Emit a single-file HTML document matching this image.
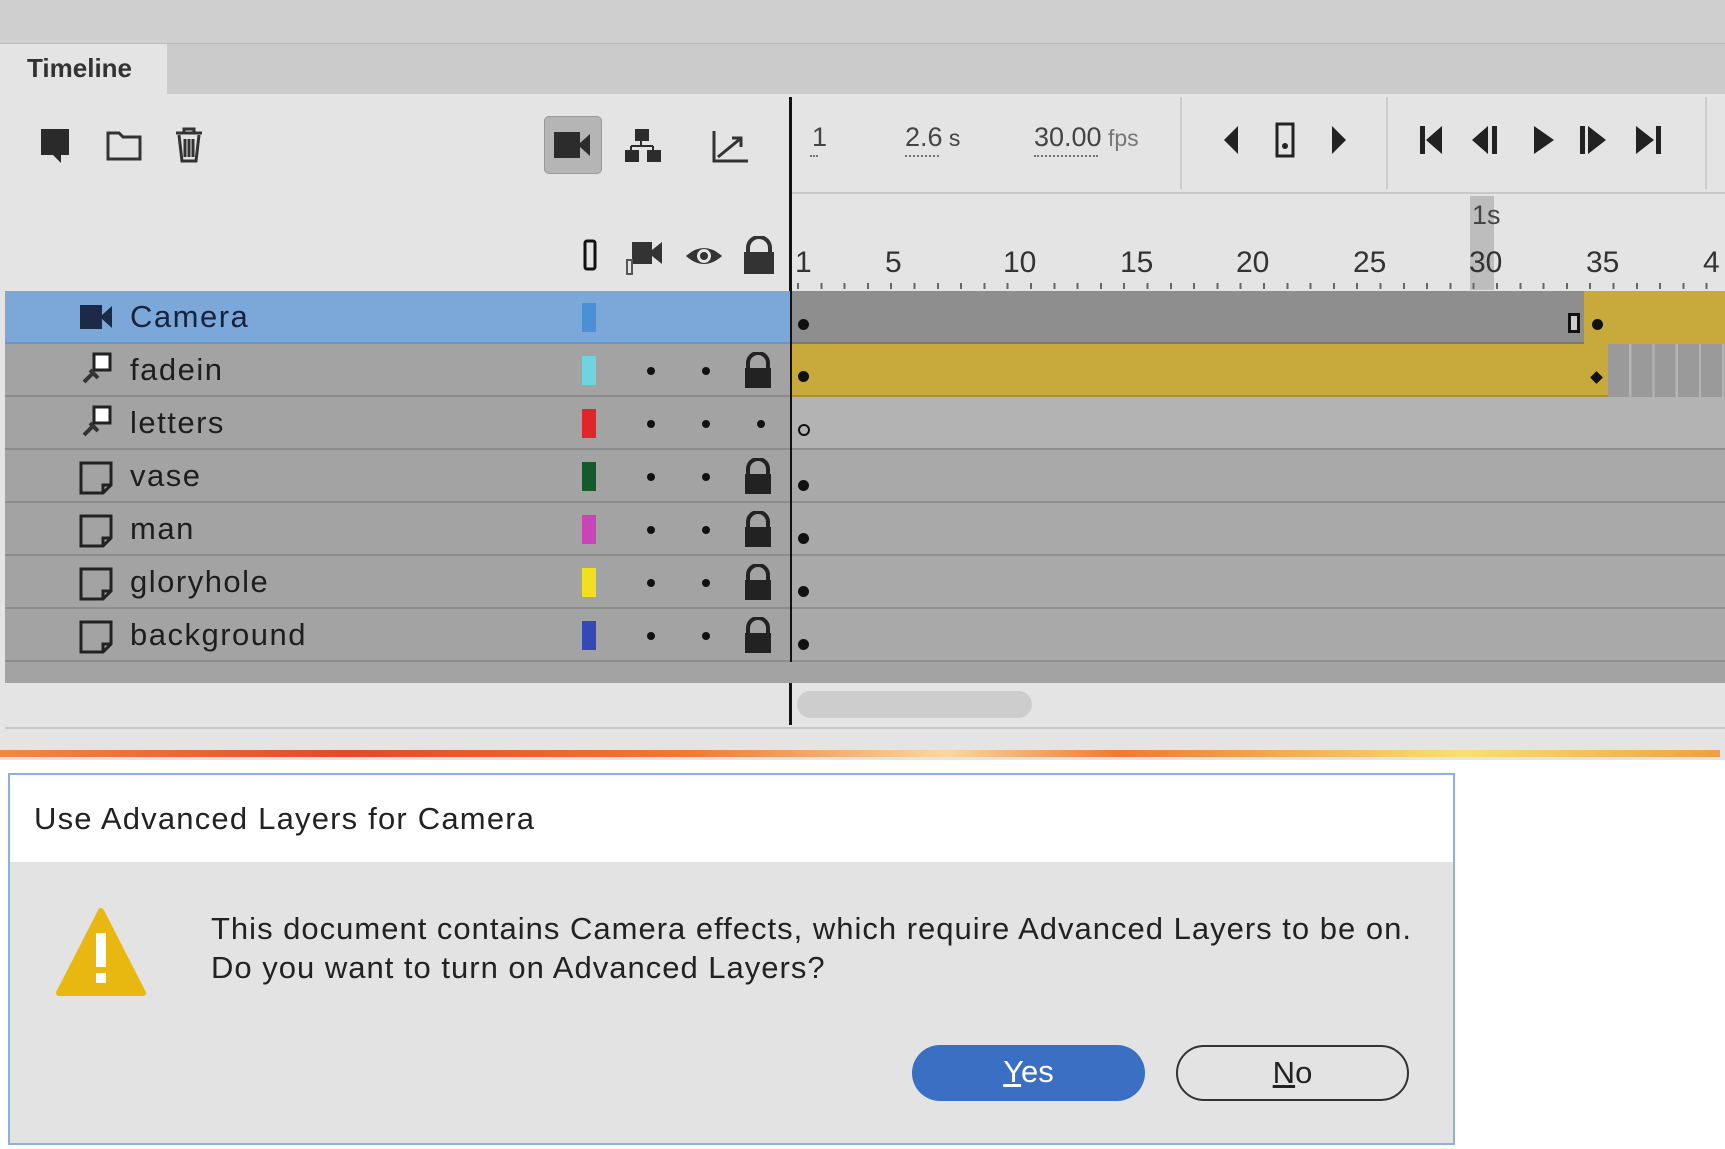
<!DOCTYPE html>
<html><head><meta charset="utf-8"><style>
*{margin:0;padding:0;box-sizing:border-box}
body{width:1725px;height:1149px;background:#fff;position:relative;overflow:hidden;font-family:"Liberation Sans",sans-serif;color:#222}
.a{position:absolute}
.t{position:absolute;white-space:nowrap}
.row{position:absolute;left:5px;width:785px;height:53px;background:#a3a3a3;border-bottom:2px solid #8c8c8c}
.rr{position:absolute;left:792px;width:933px;height:53px;background:#a9a9a9;border-bottom:2px solid #8f8f8f}
.nm{position:absolute;left:130px;top:8px;font-size:31px;color:#1e1e1e;letter-spacing:1.5px;white-space:nowrap}
.sw{position:absolute;left:582px;top:12px;width:14px;height:29px}
.dot{position:absolute;width:8px;height:8px;border-radius:50%;background:#111;top:23px}
.kf{position:absolute;width:11px;height:11px;border-radius:50%;background:#111;left:6px;top:30px}
.fn{position:absolute;top:246px;font-size:30px;color:#333}
</style></head><body>
<div class="a" style="left:0;top:0;width:1725px;height:760px;background:#e4e4e4"></div>
<div class="a" style="left:0;top:0;width:1725px;height:44px;background:#cfcfcf;border-bottom:1px solid #bdbdbd"></div>
<div class="a" style="left:167px;top:44px;width:1558px;height:50px;background:#cbcbcb"></div>
<div class="a" style="left:5px;top:44px;width:162px;height:52px;background:#e4e4e4"></div>
<div class="t" style="left:27px;top:53px;font-size:26px;font-weight:bold;color:#333">Timeline</div>
<svg class="a" style="left:38px;top:123px" width="180" height="42">
<path d="M3 6h28v26h-8v8l-8-8h-12z" fill="#2a2a2a"/>
<path d="M70 10h11l4 4h17v22h-32z" fill="none" stroke="#333" stroke-width="3"/>
<path d="M138 10h26M146 10v-4h10v4M141 12l3 26h14l3-26M147 16v18M151 16v18M155 16v18" fill="none" stroke="#333" stroke-width="3"/>
</svg>
<div class="a" style="left:544px;top:116px;width:58px;height:58px;background:#b5b5b5;border-radius:5px;border:1px solid #999"></div>
<svg class="a" style="left:550px;top:125px" width="200" height="42">
<path d="M4 7h26v26h-26z M30 18l10-9v22l-10-9z" fill="#2c2c2c"/>
<path d="M86 5h12v10h-12zM91 15v6M81 21h22M81 21v5M103 21v5M76 26h12v10h-12zM98 26h12v10h-12z" fill="#2c2c2c" stroke="#2c2c2c" stroke-width="2"/>
<path d="M164 6v30h34M168 32l22-18M182 13h9v9" fill="none" stroke="#333" stroke-width="3"/>
</svg>
<div class="a" style="left:789px;top:97px;width:3px;height:628px;background:#111"></div>
<div class="t" style="left:812px;top:122px;font-size:27px;color:#444">1</div>
<div class="t" style="left:905px;top:122px;font-size:27px;color:#444">2.6<span style="font-size:23px"> s</span></div>
<div class="t" style="left:1034px;top:122px;font-size:27px;color:#444">30.00<span style="font-size:23px;color:#777"> fps</span></div>
<div class="a" style="left:810px;top:155px;width:8px;border-top:2px dotted #777"></div>
<div class="a" style="left:905px;top:155px;width:34px;border-top:2px dotted #777"></div>
<div class="a" style="left:1034px;top:155px;width:64px;border-top:2px dotted #777"></div>
<div class="a" style="left:1180px;top:97px;width:2px;height:92px;background:#ccc"></div>
<div class="a" style="left:1386px;top:97px;width:2px;height:92px;background:#ccc"></div>
<div class="a" style="left:1705px;top:97px;width:2px;height:92px;background:#ccc"></div>
<svg class="a" style="left:1220px;top:120px" width="500" height="40">
<path d="M4 20l14-14v28z" fill="#222"/>
<rect x="57" y="4" width="16" height="32" fill="none" stroke="#222" stroke-width="3"/><circle cx="65" cy="26" r="3" fill="#222"/>
<path d="M112 6l14 14-14 14z" fill="#222"/>
<path d="M200 6h5v28h-5zM222 6v28l-16-14z" fill="#222"/>
<path d="M268 6v28l-16-14zM272 6h5v28h-5z" fill="#222"/>
<path d="M314 6l20 14-20 14z" fill="#222"/>
<path d="M360 6h5v28h-5zM368 6l18 14-18 14z" fill="#222"/>
<path d="M416 6l18 14-18 14zM436 6h5v28h-5z" fill="#222"/>
</svg>
<div class="a" style="left:792px;top:192px;width:933px;height:2px;background:#c8c8c8"></div>
<div class="a" style="left:1470px;top:196px;width:24px;height:94px;background:#bdbdbd"></div>
<div class="t" style="left:1472px;top:200px;font-size:27px;color:#444">1s</div>
<div class="fn" style="left:795px">1</div>
<div class="fn" style="left:885px">5</div>
<div class="fn" style="left:1003px">10</div>
<div class="fn" style="left:1120px">15</div>
<div class="fn" style="left:1236px">20</div>
<div class="fn" style="left:1353px">25</div>
<div class="fn" style="left:1469px">30</div>
<div class="fn" style="left:1586px">35</div>
<div class="fn" style="left:1703px">4</div>
<div class="a" style="left:797px;top:283px;width:928px;height:6px;background:repeating-linear-gradient(90deg,#666 0 2px,transparent 2px 23.3px)"></div>
<svg class="a" style="left:578px;top:236px" width="220" height="46">
<rect x="7" y="5" width="10" height="28" rx="2" fill="none" stroke="#111" stroke-width="3"/>
<path d="M54 6h20v22h-20zM74 14l10-8v22l-10-8z" fill="#333"/><path d="M49 24v14h5v-14z" fill="none" stroke="#555" stroke-width="2"/>
<path d="M108 20q18-16 36 0q-18 16-36 0z" fill="#333"/><circle cx="126" cy="20" r="7" fill="#e4e4e4"/><circle cx="126" cy="20" r="4" fill="#333"/>
<path d="M170 16v-4a11 11 0 0 1 22 0v4" fill="none" stroke="#333" stroke-width="4"/><rect x="166" y="16" width="30" height="22" fill="#333"/>
</svg>
<div class="row" style="top:291px;background:#7ba7d9;border-bottom:2px solid #6a95c8"></div>
<div class="a" style="left:792px;top:291px;width:792px;height:53px;background:#8e8e8e;border-bottom:2px solid #7a7a7a"></div>
<div class="a" style="left:1584px;top:291px;width:141px;height:53px;background:#c8a93c"></div>
<svg class="a" style="left:78px;top:303px" width="40" height="30"><path d="M2 2h22v24h-22zM24 12l10-9v22l-10-9z" fill="#1d2a45"/></svg>
<div class="nm" style="top:299px;color:#16243d">Camera</div>
<div class="sw" style="top:303px;background:#4b8fd6"></div>
<div class="a" style="left:798px;top:319px;width:11px;height:11px;border-radius:50%;background:#111"></div>
<div class="a" style="left:1568px;top:313px;width:12px;height:20px;border:3px solid #111;background:#ccc"></div>
<div class="a" style="left:1592px;top:319px;width:11px;height:11px;border-radius:50%;background:#111"></div>
<div class="row" style="top:344px"></div>
<div class="a" style="left:792px;top:344px;width:816px;height:53px;background:#c8a93c;border-bottom:2px solid #a88f30"></div>
<div class="a" style="left:1608px;top:344px;width:117px;height:53px;background:repeating-linear-gradient(90deg,#9a9a9a 0 21px,#b5b5b5 21px 23.3px)"></div>
<div class="row" style="top:397px"></div><div class="rr" style="top:397px;background:#b3b3b3"></div>
<div class="row" style="top:450px"></div><div class="rr" style="top:450px"></div>
<div class="row" style="top:503px"></div><div class="rr" style="top:503px"></div>
<div class="row" style="top:556px"></div><div class="rr" style="top:556px"></div>
<div class="row" style="top:609px"></div><div class="rr" style="top:609px"></div>
<div class="a" style="left:0;top:344px;width:1725px;height:318px">
<svg class="a" style="left:80px;top:8px" width="36" height="36"><path d="M14 2h16v16h-16z" fill="#fff" stroke="#222" stroke-width="3"/><path d="M4 30l10-10M10 18l8 8" stroke="#333" stroke-width="4"/></svg>
<div class="nm">fadein</div><div class="sw" style="background:#6fd3e0"></div>
<div class="dot" style="left:647px"></div><div class="dot" style="left:702px"></div>
<svg class="a" style="left:742px;top:8px" width="32" height="38"><path d="M6 16v-5a10 10 0 0 1 20 0v5" fill="none" stroke="#222" stroke-width="4"/><rect x="3" y="16" width="26" height="20" fill="#222"/></svg>
<div class="a" style="left:798px;top:27px;width:11px;height:11px;border-radius:50%;background:#111"></div>
<div class="a" style="left:1592px;top:29px;width:9px;height:9px;background:#111;transform:rotate(45deg)"></div>
<svg class="a" style="left:80px;top:61px" width="36" height="36"><path d="M14 2h16v16h-16z" fill="#fff" stroke="#222" stroke-width="3"/><path d="M4 30l10-10M10 18l8 8" stroke="#333" stroke-width="4"/></svg>
<div class="nm" style="top:61px">letters</div><div class="sw" style="top:65px;background:#e0262a"></div>
<div class="dot" style="left:647px;top:76px"></div><div class="dot" style="left:702px;top:76px"></div><div class="dot" style="left:757px;top:76px"></div>
<div class="a" style="left:798px;top:80px;width:12px;height:12px;border-radius:50%;border:2px solid #111"></div>
</div>
<div class="a" style="left:0;top:450px;width:1725px;height:53px">
<svg class="a" style="left:78px;top:10px" width="36" height="36"><path d="M3 3h30v22l-8 8h-22z M25 33v-8h8" fill="none" stroke="#222" stroke-width="3"/></svg>
<div class="nm">vase</div><div class="sw" style="background:#145a2a"></div>
<div class="dot" style="left:647px"></div><div class="dot" style="left:702px"></div>
<svg class="a" style="left:742px;top:8px" width="32" height="38"><path d="M6 16v-5a10 10 0 0 1 20 0v5" fill="none" stroke="#222" stroke-width="4"/><rect x="3" y="16" width="26" height="20" fill="#222"/></svg>
<div class="kf" style="left:798px"></div>
</div>
<div class="a" style="left:0;top:503px;width:1725px;height:53px">
<svg class="a" style="left:78px;top:10px" width="36" height="36"><path d="M3 3h30v22l-8 8h-22z M25 33v-8h8" fill="none" stroke="#222" stroke-width="3"/></svg>
<div class="nm">man</div><div class="sw" style="background:#c844b8"></div>
<div class="dot" style="left:647px"></div><div class="dot" style="left:702px"></div>
<svg class="a" style="left:742px;top:8px" width="32" height="38"><path d="M6 16v-5a10 10 0 0 1 20 0v5" fill="none" stroke="#222" stroke-width="4"/><rect x="3" y="16" width="26" height="20" fill="#222"/></svg>
<div class="kf" style="left:798px"></div>
</div>
<div class="a" style="left:0;top:556px;width:1725px;height:53px">
<svg class="a" style="left:78px;top:10px" width="36" height="36"><path d="M3 3h30v22l-8 8h-22z M25 33v-8h8" fill="none" stroke="#222" stroke-width="3"/></svg>
<div class="nm">gloryhole</div><div class="sw" style="background:#f0e020"></div>
<div class="dot" style="left:647px"></div><div class="dot" style="left:702px"></div>
<svg class="a" style="left:742px;top:8px" width="32" height="38"><path d="M6 16v-5a10 10 0 0 1 20 0v5" fill="none" stroke="#222" stroke-width="4"/><rect x="3" y="16" width="26" height="20" fill="#222"/></svg>
<div class="kf" style="left:798px"></div>
</div>
<div class="a" style="left:0;top:609px;width:1725px;height:53px">
<svg class="a" style="left:78px;top:10px" width="36" height="36"><path d="M3 3h30v22l-8 8h-22z M25 33v-8h8" fill="none" stroke="#222" stroke-width="3"/></svg>
<div class="nm">background</div><div class="sw" style="background:#3448b8"></div>
<div class="dot" style="left:647px"></div><div class="dot" style="left:702px"></div>
<svg class="a" style="left:742px;top:8px" width="32" height="38"><path d="M6 16v-5a10 10 0 0 1 20 0v5" fill="none" stroke="#222" stroke-width="4"/><rect x="3" y="16" width="26" height="20" fill="#222"/></svg>
<div class="kf" style="left:798px"></div>
</div>
<div class="a" style="left:5px;top:662px;width:1720px;height:21px;background:#a3a3a3"></div>
<div class="a" style="left:797px;top:691px;width:235px;height:27px;border-radius:14px;background:#cdcdcd"></div>
<div class="a" style="left:5px;top:727px;width:1720px;height:2px;background:#c6c6c6"></div>
<div class="a" style="left:0;top:750px;width:1720px;height:7px;background:linear-gradient(90deg,#f08a40,#e24a2a 20%,#f07a30 40%,#f8d8a0 55%,#f07a30 65%,#f8e070 85%,#f0a040)"></div>
<div class="a" style="left:8px;top:773px;width:1447px;height:372px;border:2px solid #8fb0dc;background:#e3e3e3">
<div class="a" style="left:0;top:0;width:1443px;height:87px;background:#fff"></div>
<div class="t" style="left:24px;top:26px;font-size:31px;color:#222;letter-spacing:1.2px">Use Advanced Layers for Camera</div>
<svg class="a" style="left:45px;top:132px" width="92" height="90"><path d="M46 4l42 82h-84z" fill="#e8b810" stroke="#e8b810" stroke-width="6" stroke-linejoin="round"/><rect x="41" y="26" width="10" height="34" fill="#fff"/><rect x="41" y="66" width="10" height="10" fill="#fff"/></svg>
<div class="t" style="left:201px;top:134px;font-size:31px;line-height:39px;color:#222;letter-spacing:1px">This document contains Camera effects, which require Advanced Layers to be on.<br>Do you want to turn on Advanced Layers?</div>
<div class="a" style="left:902px;top:270px;width:233px;height:56px;border-radius:28px;background:#3a6fc4;color:#fff;font-size:31px;text-align:center;line-height:54px"><u>Y</u>es</div>
<div class="a" style="left:1166px;top:270px;width:233px;height:56px;border-radius:28px;border:2px solid #333;background:#e3e3e3;color:#222;font-size:31px;text-align:center;line-height:52px"><u>N</u>o</div>
</div>
</body></html>
